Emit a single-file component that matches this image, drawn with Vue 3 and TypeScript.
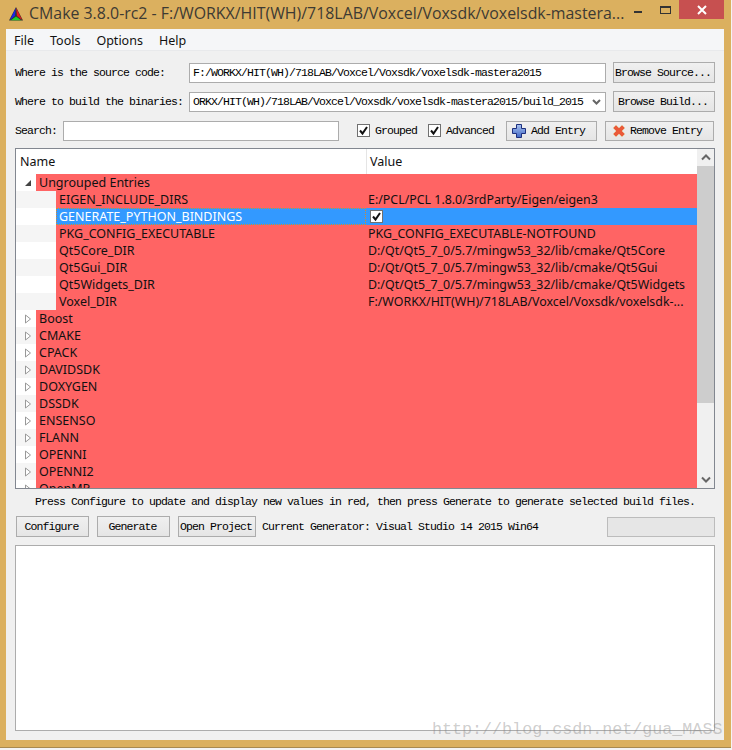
<template>
  <div class="window">
    <header class="titlebar">
      <svg class="logo" width="16" height="16" viewBox="0 0 16 16">
        <path d="M8 1 L1 14.500 H15 Z" fill="#333" />
        <path d="M7.800 2 L1.800 14 L7 10 Z" fill="#1a22e8" />
        <path d="M8.200 2 L14.200 14 L9 10 Z" fill="#e81a1a" />
        <path d="M2.800 14.200 L8 10.500 L13.200 14.200 Z" fill="#1fd02a" />
      </svg>
      <span class="title">CMake 3.8.0-rc2 - F:/WORKX/HIT(WH)/718LAB/Voxcel/Voxsdk/voxelsdk-mastera...</span>
      <div class="controls">
        <span class="ctl-min"></span>
        <span class="ctl-max"></span>
        <span class="ctl-close">
          <svg width="10" height="10" viewBox="0 0 10 10"><path d="M1 1 L9 9 M9 1 L1 9" stroke="#fff" stroke-width="2" /></svg>
        </span>
      </div>
    </header>

    <div class="client">
      <nav class="menubar">
        <span v-for="m in menus" :key="m">{{ m }}</span>
      </nav>

      <section class="form">
        <label class="lbl">Where is the source code:</label>
        <div class="field">F:/WORKX/HIT(WH)/718LAB/Voxcel/Voxsdk/voxelsdk-mastera2015</div>
        <button class="btn browse">Browse Source...</button>

        <label class="lbl">Where to build the binaries:</label>
        <div class="field combo">
          <span>ORKX/HIT(WH)/718LAB/Voxcel/Voxsdk/voxelsdk-mastera2015/build_2015</span>
          <svg width="9" height="6" viewBox="0 0 9 6"><path d="M1 1 L4.500 4.500 L8 1" fill="none" stroke="#666" stroke-width="2" /></svg>
        </div>
        <button class="btn browse">Browse Build...</button>
      </section>

      <section class="search">
        <label class="lbl">Search:</label>
        <div class="field search-input"></div>
        <span class="check first"><i class="box"><svg width="11" height="11" viewBox="0 0 11 11"><path d="M2 5.500 L4.500 8.500 L9 2" fill="none" stroke="#111" stroke-width="2" /></svg></i>Grouped</span>
        <span class="check second"><i class="box"><svg width="11" height="11" viewBox="0 0 11 11"><path d="M2 5.500 L4.500 8.500 L9 2" fill="none" stroke="#111" stroke-width="2" /></svg></i>Advanced</span>
        <button class="btn entry add">
          <svg width="14" height="14" viewBox="0 0 14 14">
            <defs>
              <linearGradient id="plus" x1="0" y1="0" x2="0" y2="1">
                <stop offset="0" stop-color="#a9c3f0" />
                <stop offset="1" stop-color="#3f66c4" />
              </linearGradient>
            </defs>
            <path d="M4.500 0.500 H9.500 V4.500 H13.500 V9.500 H9.500 V13.500 H4.500 V9.500 H0.500 V4.500 H4.500 Z" fill="url(#plus)" stroke="#1d2f7e" stroke-width="1" />
          </svg>
          Add Entry
        </button>
        <button class="btn entry remove">
          <svg width="14" height="14" viewBox="0 0 14 14">
            <path d="M1 4 L4 1 L7 4 L10 1 L13 4 L10 7 L13 10 L10 13 L7 10 L4 13 L1 10 L4 7 Z" fill="#ea5a3a" stroke="#e6c4a4" stroke-width="1" />
          </svg>
          Remove Entry
        </button>
      </section>

      <section class="tree">
        <div class="tree-main">
          <div class="thead">
            <div class="th name">Name</div>
            <div class="th">Value</div>
          </div>
          <div class="tbody">
            <div v-for="(r, i) in rows" :key="r.name" class="row" :class="{ alt: i % 2 === 1, sel: r.selected, child: r.child }">
              <div class="gutter">
                <svg v-if="r.open" width="8" height="8" viewBox="0 0 8 8"><path d="M7 1 V7 H1 Z" fill="#444" /></svg>
                <svg v-else-if="!r.child" width="8" height="10" viewBox="0 0 8 10"><path d="M1.500 1 L6.500 5 L1.500 9 Z" fill="#fff" stroke="#999" /></svg>
              </div>
              <div class="cell-name">{{ r.name }}</div>
              <div class="cell-value">
                <i v-if="r.selected" class="box small"><svg width="11" height="11" viewBox="0 0 11 11"><path d="M2 5.500 L4.500 8.500 L9 2" fill="none" stroke="#111" stroke-width="2" /></svg></i>
                <span v-else>{{ r.value }}</span>
              </div>
            </div>
          </div>
        </div>
        <div class="scroll">
          <div class="arrow"><svg width="10" height="7" viewBox="0 0 10 7"><path d="M1 5.500 L5 1.500 L9 5.500" fill="none" stroke="#666" stroke-width="2" /></svg></div>
          <div class="track"><div class="thumb"></div></div>
          <div class="arrow"><svg width="10" height="7" viewBox="0 0 10 7"><path d="M1 1.500 L5 5.500 L9 1.500" fill="none" stroke="#666" stroke-width="2" /></svg></div>
        </div>
      </section>

      <p class="hint">Press Configure to update and display new values in red, then press Generate to generate selected build files.</p>

      <section class="actions">
        <button class="btn act">Configure</button>
        <button class="btn act">Generate</button>
        <button class="btn act open">Open Project</button>
        <span class="gen">Current Generator: Visual Studio 14 2015 Win64</span>
        <div class="progress"></div>
      </section>

      <div class="output"></div>
    </div>
    <div class="watermark">http://blog.csdn.net/gua_MASS</div>
  </div>
</template>

<script setup lang="ts">
interface Row {
  name: string;
  value?: string;
  open?: boolean;
  child?: boolean;
  selected?: boolean;
}

const menus = ['File', 'Tools', 'Options', 'Help'];

const qtBase = 'D:/Qt/Qt5_7_0/5.7/mingw53_32/lib/cmake/';

const groups = ['Boost', 'CMAKE', 'CPACK', 'DAVIDSDK', 'DOXYGEN', 'DSSDK', 'ENSENSO', 'FLANN', 'OPENNI', 'OPENNI2', 'OpenMP'];

const rows: Row[] = [
  { name: 'Ungrouped Entries', open: true },
  { name: 'EIGEN_INCLUDE_DIRS', value: 'E:/PCL/PCL 1.8.0/3rdParty/Eigen/eigen3', child: true },
  { name: 'GENERATE_PYTHON_BINDINGS', child: true, selected: true },
  { name: 'PKG_CONFIG_EXECUTABLE', value: 'PKG_CONFIG_EXECUTABLE-NOTFOUND', child: true },
  { name: 'Qt5Core_DIR', value: qtBase + 'Qt5Core', child: true },
  { name: 'Qt5Gui_DIR', value: qtBase + 'Qt5Gui', child: true },
  { name: 'Qt5Widgets_DIR', value: qtBase + 'Qt5Widgets', child: true },
  { name: 'Voxel_DIR', value: 'F:/WORKX/HIT(WH)/718LAB/Voxcel/Voxsdk/voxelsdk-...', child: true },
  ...groups.map((name) => ({ name }))
];
</script>

<style>
body {
  background: #f4f4f4;
}
</style>

<style scoped>
.window {
  position: relative;
  width: 731px;
  height: 748px;
  box-sizing: border-box;
  background: #dbb05f;
  border-bottom: 1px solid #a88a50;
  padding: 0 7px 7px 6px;
  display: flex;
  flex-direction: column;
  overflow: hidden;
}

.titlebar {
  height: 29px;
  flex-shrink: 0;
  display: flex;
  align-items: flex-start;
}

.logo {
  margin: 6px 0 0 2px;
}

.title {
  margin: 3px 0 0 5px;
  font: 15.9px/20px "Open Sans", "Noto Sans", sans-serif;
  color: #3d3a33;
  white-space: nowrap;
}

.controls {
  margin-left: auto;
  display: flex;
  align-items: flex-start;
}

.ctl-min {
  width: 8px;
  height: 2px;
  margin: 11px 18px 0 0;
  background: #333;
}

.ctl-max {
  width: 9px;
  height: 5px;
  margin: 6px 8px 0 0;
  border: 1px solid #333;
  border-top-width: 2px;
}

.ctl-close {
  width: 45px;
  height: 19px;
  background: #c75050;
  display: flex;
  align-items: center;
  justify-content: center;
}

.client {
  flex: 1;
  background: #f0f0f0;
  display: flex;
  flex-direction: column;
  font: 11.5px/14px "Liberation Mono", "DejaVu Sans Mono", monospace;
  letter-spacing: -0.9px;
  color: #000;
}

.menubar {
  height: 22px;
  box-sizing: border-box;
  background: #f5f6f8;
  border-bottom: 1px solid #e8e9eb;
  padding: 2px 0 0 8px;
  display: flex;
  gap: 16px;
  align-items: center;
  font: 12.5px "Noto Sans", sans-serif;
  letter-spacing: 0;
  color: #111;
}

.form {
  display: grid;
  grid-template-columns: 168px 416px 102px;
  column-gap: 7px;
  row-gap: 8px;
  padding: 11px 0 0 9px;
  align-items: center;
}

.lbl {
  white-space: nowrap;
}

.form .field {
  margin-left: -1px;
}

.field {
  height: 20px;
  box-sizing: border-box;
  background: #fff;
  border: 1px solid #acacac;
  padding-left: 3px;
  display: flex;
  align-items: center;
  justify-content: space-between;
  white-space: nowrap;
  overflow: hidden;
}

.combo svg {
  margin-right: 4px;
  flex-shrink: 0;
}

.btn {
  box-sizing: border-box;
  height: 21px;
  padding: 0 2px 0 0;
  background: linear-gradient(#f0f0f0, #e5e5e5);
  border: 1px solid #acacac;
  font: inherit;
  letter-spacing: inherit;
  color: #000;
  display: flex;
  align-items: center;
  justify-content: center;
  gap: 5px;
  white-space: nowrap;
}

.search {
  display: flex;
  align-items: center;
  height: 21px;
  margin-top: 8px;
  padding-left: 9px;
}

.search-input {
  width: 276px;
  margin-left: 6px;
}

.check {
  display: flex;
  align-items: center;
  gap: 5px;
}

.check.first {
  margin-left: 18px;
}

.check.second {
  margin-left: 11px;
}

.box {
  width: 13px;
  height: 13px;
  box-sizing: border-box;
  background: #fff;
  border: 1px solid #707070;
  display: flex;
  align-items: center;
  justify-content: center;
}

.box svg {
  flex-shrink: 0;
}

.entry {
  height: 20px;
  justify-content: flex-start;
}

.add {
  width: 91px;
  margin-left: 12px;
  padding-left: 5px;
}

.remove {
  width: 109px;
  margin-left: 8px;
  padding-left: 6px;
  gap: 4px;
}

.tree {
  height: 341px;
  box-sizing: border-box;
  margin: 7px 9px 0 9px;
  border: 1px solid #828790;
  background: #fff;
  display: flex;
  font: 12.5px/17px "Noto Sans", sans-serif;
  letter-spacing: 0;
  color: #111;
}

.tree-main {
  flex: 1;
  min-width: 0;
  display: flex;
  flex-direction: column;
}

.thead {
  height: 25px;
  flex-shrink: 0;
  display: flex;
  align-items: center;
}

.th {
  padding-left: 3px;
  height: 100%;
  display: flex;
  align-items: center;
}

.th.name {
  width: 346px;
  padding-left: 4px;
  border-right: 1px solid #e5e5e5;
}

.tbody {
  flex: 1;
  overflow: hidden;
}

.row {
  height: 17px;
  display: flex;
  background: #ff6464;
  white-space: nowrap;
}

.gutter {
  width: 20px;
  flex-shrink: 0;
  background: #fff;
  display: flex;
  align-items: center;
  justify-content: center;
  padding-left: 4px;
  box-sizing: border-box;
}

.row.alt .gutter,
.row.alt.child::before {
  background: #f5f5f5;
}

.row.child::before {
  content: "";
  width: 20px;
  flex-shrink: 0;
  background: #fff;
}

.cell-name {
  width: 330px;
  flex-shrink: 0;
  padding-left: 3px;
  box-sizing: border-box;
  overflow: hidden;
}

.row.child .cell-name {
  width: 310px;
}

.cell-value {
  padding-left: 2px;
  display: flex;
  align-items: center;
  font-size: 12.4px;
}

.row.sel {
  background: #3399ff;
  color: #fff;
}

.row.sel .cell-name {
  outline: 1px dotted #d98a2c;
  outline-offset: -1px;
}

.box.small {
  margin-left: 2px;
}

.scroll {
  width: 17px;
  flex-shrink: 0;
  background: #f0f0f0;
  display: flex;
  flex-direction: column;
}

.arrow {
  height: 17px;
  display: flex;
  align-items: center;
  justify-content: center;
  flex-shrink: 0;
}

.track {
  flex: 1;
}

.thumb {
  height: 237px;
  background: #cdcdcd;
}

.hint {
  margin: 6px 0 0 29px;
  height: 14px;
  white-space: nowrap;
}

.actions {
  display: flex;
  align-items: center;
  margin-top: 7px;
  padding-left: 10px;
}

.act {
  width: 73px;
  margin-right: 8px;
}

.open {
  width: 78px;
  margin-right: 6px;
}

.progress {
  width: 108px;
  height: 20px;
  box-sizing: border-box;
  margin-left: auto;
  margin-right: 9px;
  background: #e6e6e6;
  border: 1px solid #bcbcbc;
}

.output {
  height: 186px;
  box-sizing: border-box;
  margin: 8px 9px 0;
  background: #fff;
  border: 1px solid #acacac;
}

.watermark {
  position: absolute;
  left: 432px;
  top: 720px;
  font: 16.7px/20px "Liberation Mono", monospace;
  color: rgba(130, 130, 130, 0.4);
  white-space: nowrap;
}
</style>
